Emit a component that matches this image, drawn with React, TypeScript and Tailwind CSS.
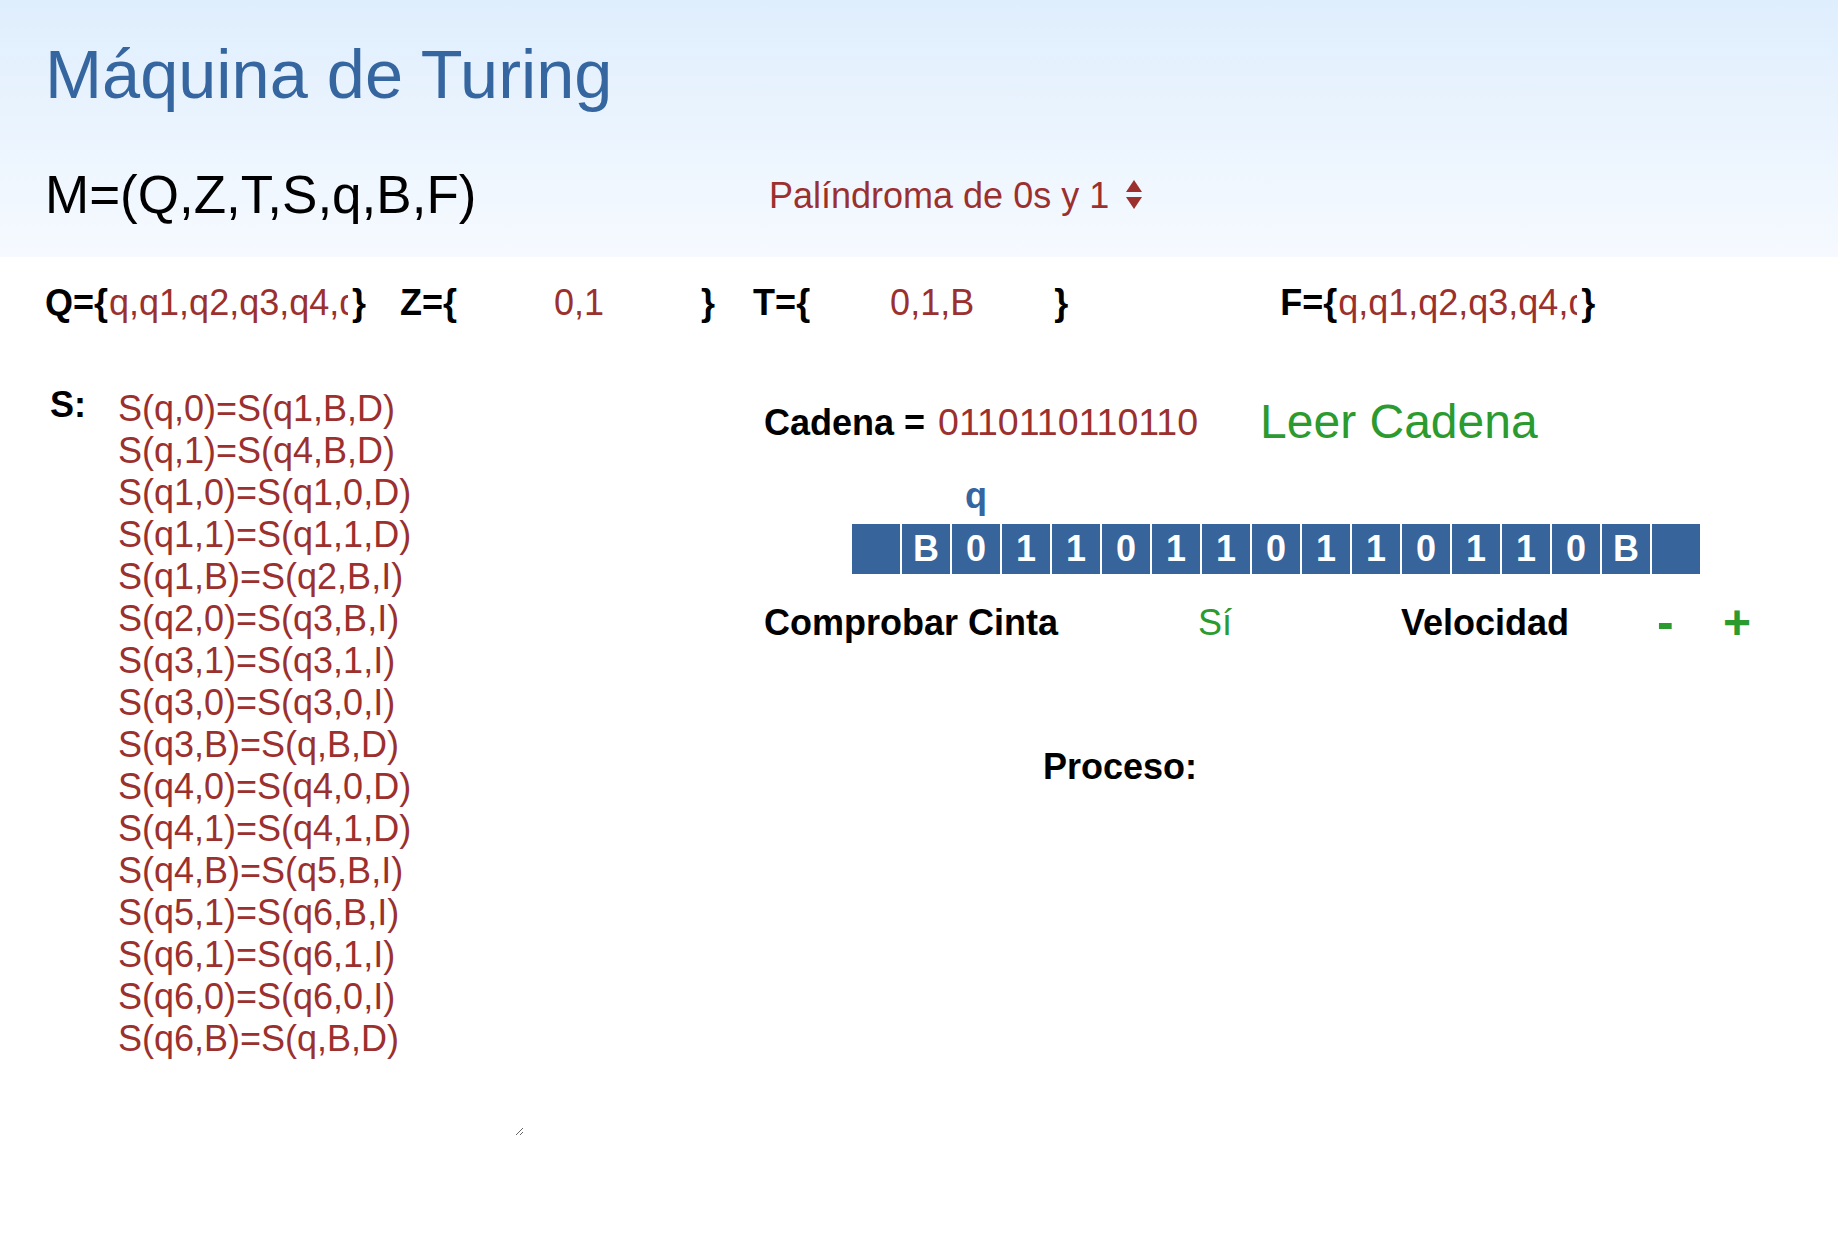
import React from "react";

const tape = ["", "B", "0", "1", "1", "0", "1", "1", "0", "1", "1", "0", "1", "1", "0", "B", ""];

const rules = [
  "S(q,0)=S(q1,B,D)",
  "S(q,1)=S(q4,B,D)",
  "S(q1,0)=S(q1,0,D)",
  "S(q1,1)=S(q1,1,D)",
  "S(q1,B)=S(q2,B,I)",
  "S(q2,0)=S(q3,B,I)",
  "S(q3,1)=S(q3,1,I)",
  "S(q3,0)=S(q3,0,I)",
  "S(q3,B)=S(q,B,D)",
  "S(q4,0)=S(q4,0,D)",
  "S(q4,1)=S(q4,1,D)",
  "S(q4,B)=S(q5,B,I)",
  "S(q5,1)=S(q6,B,I)",
  "S(q6,1)=S(q6,1,I)",
  "S(q6,0)=S(q6,0,I)",
  "S(q6,B)=S(q,B,D)",
];

const font = { fontFamily: '"Liberation Sans", Arial, Helvetica, sans-serif' };

function SetInput({ value, center }: { value: string; center?: boolean }) {
  return (
    <input
      readOnly
      value={value}
      className={
        "w-[244px] h-[41px] bg-transparent border-0 outline-none text-[36px] leading-[41px] text-[#9b302e] " +
        (center ? "text-center px-1" : "text-left pl-[1px] pr-1")
      }
    />
  );
}

export default function App() {
  return (
    <div className="min-h-screen bg-white text-black" style={font}>
      {/* header */}
      <div className="h-[257px] bg-gradient-to-b from-[#dfeefd] to-[#f6faff] pl-[45px] pt-[36px]">
        <h1 className="text-[68.5px] leading-[77px] text-[#3566a0] font-normal">Máquina de Turing</h1>
        <div className="mt-[52px] flex items-center h-[60px]">
          <div className="text-[53px] leading-[60px] w-[724px]">M=(Q,Z,T,S,q,B,F)</div>
          <div className="flex items-center text-[36px] leading-[41px] text-[#9b302e]">
            <span>Palíndroma de 0s y 1</span>
            <svg className="ml-[16px]" width="18" height="34" viewBox="0 0 18 34">
              <polygon points="9,2 17,14 1,14" fill="#9b302e" />
              <polygon points="1,19 17,19 9,31" fill="#9b302e" />
            </svg>
          </div>
        </div>
      </div>

      {/* sets row */}
      <div className="mt-[25px] pl-[45px] flex items-center h-[41px] text-[36px] leading-[41px]">
        <span className="font-bold">Q={"{"}</span>
        <SetInput value="q,q1,q2,q3,q4,q5,q6" />
        <span className="font-bold">{"}"}</span>
        <span className="font-bold ml-[34px]">Z={"{"}</span>
        <SetInput value="0,1" center />
        <span className="font-bold">{"}"}</span>
        <span className="font-bold ml-[38px]">T={"{"}</span>
        <SetInput value="0,1,B" center />
        <span className="font-bold">{"}"}</span>
        <span className="font-bold ml-[212px]">F={"{"}</span>
        <SetInput value="q,q1,q2,q3,q4,q5,q6" />
        <span className="font-bold">{"}"}</span>
      </div>

      {/* main */}
      <div className="mt-[61px] flex items-start">
        <div className="ml-[50px] text-[36px] leading-[41px] font-bold w-[36px]">S:</div>
        <textarea
          readOnly
          defaultValue={rules.join("\n")}
          className="ml-[30px] mt-[2px] w-[408px] h-[750px] p-[2px] bg-transparent border-0 outline-none text-[36px] leading-[42px] text-[#9b302e] overflow-hidden"
        />

        <div className="ml-[240px] mt-[10px] flex flex-col">
          <div className="flex items-center h-[56px]">
            <span className="text-[36px] leading-[41px] font-bold">Cadena =</span>
            <span className="ml-[13px] text-[37.5px] leading-[41px] text-[#9b302e]">0110110110110</span>
            <span className="ml-[62px] text-[48px] leading-[56px] text-[#2b9a2f]">Leer Cadena</span>
          </div>

          <div className="mt-[25px] ml-[88px] flex gap-[2px] h-[41px]">
            {tape.map((_, i) => (
              <div key={i} className="w-[48px] text-center text-[36px] leading-[41px] font-bold text-[#3566a0]">
                {i === 2 ? "q" : ""}
              </div>
            ))}
          </div>

          <div className="mt-[8px] ml-[88px] flex gap-[2px]">
            {tape.map((c, i) => (
              <div
                key={i}
                className="w-[48px] h-[50px] bg-[#36649b] flex items-center justify-center text-white font-bold text-[36px] leading-none"
              >
                {c}
              </div>
            ))}
          </div>

          <div className="mt-[28px] flex items-center h-[41px] text-[36px] leading-[41px]">
            <span className="font-bold w-[434px]">Comprobar Cinta</span>
            <span className="text-[#2b9a2f] w-[203px]">Sí</span>
            <span className="font-bold w-[256px]">Velocidad</span>
            <span className="font-bold text-[50px] leading-[41px] text-[#2b9a2f] w-[66px]">-</span>
            <span className="font-bold text-[48px] leading-[41px] text-[#2b9a2f]">+</span>
          </div>

          <div className="mt-[103px] ml-[279px] text-[36px] leading-[41px] font-bold">Proceso:</div>
        </div>
      </div>
    </div>
  );
}
